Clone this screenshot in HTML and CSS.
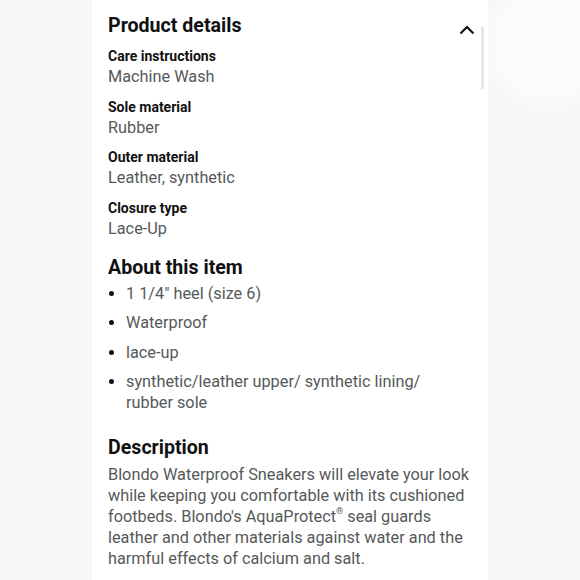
FILE: index.html
```html
<!DOCTYPE html>
<html>
<head>
<meta charset="utf-8">
<link rel="stylesheet" href="styles.css">
</head>
<body>
<div class="page">
  <div class="panel">
    <section class="details">
      <div class="head">
        <h2 class="title">Product details</h2>
        <svg class="chev" width="16" height="10" viewBox="0 0 16 10"><path d="M1.5 8.5 L8 2 L14.5 8.5" fill="none" stroke="#0f1111" stroke-width="2.2"/></svg>
      </div>
      <div class="scrollbar"></div>
      <div class="attr"><div class="label">Care instructions</div><div class="value">Machine Wash</div></div>
      <div class="attr"><div class="label">Sole material</div><div class="value">Rubber</div></div>
      <div class="attr"><div class="label">Outer material</div><div class="value">Leather, synthetic</div></div>
      <div class="attr"><div class="label">Closure type</div><div class="value">Lace-Up</div></div>
    </section>
    <section class="about">
      <h2 class="title">About this item</h2>
      <ul class="bullets">
        <li>1 1/4" heel (size 6)</li>
        <li>Waterproof</li>
        <li>lace-up</li>
        <li>synthetic/leather upper/ synthetic lining/ rubber sole</li>
      </ul>
    </section>
    <section class="desc">
      <h2 class="title">Description</h2>
      <p class="text">Blondo Waterproof Sneakers will elevate your look while keeping you comfortable with its cushioned footbeds. Blondo's AquaProtect<span class="reg">®</span> seal guards leather and other materials against water and the harmful effects of calcium and salt.</p>
    </section>
  </div>
  <div class="side"></div>
</div>
</body>
</html>
```
FILE: styles.css
```css
* { box-sizing: border-box; }
html, body { margin: 0; padding: 0; }
body {
  width: 580px;
  height: 580px;
  overflow: hidden;
  background: #f7f7f7;
  font-family: Roboto, "Noto Sans", sans-serif;
  color: #0f1111;
}
.page {
  display: flex;
  height: 580px;
  padding-left: 92px;
}
.panel {
  width: 396px;
  background: #fff;
  padding: 12px 16px 0 16px;
}
.side {
  flex: 1;
  background: radial-gradient(circle at 60px 45px, #fcfcfc 0, #fcfcfc 45px, #f7f7f7 70px);
}
.details { position: relative; }
.head {
  display: flex;
  justify-content: space-between;
  align-items: center;
}
.title {
  margin: 0;
  font-size: 19.6px;
  font-weight: 700;
  line-height: 28px;
}
.chev { margin-top: 8px; margin-right: -3px; }
.scrollbar {
  position: absolute;
  right: -12px;
  top: 15px;
  width: 3px;
  height: 62px;
  background: #e6e6e6;
}
.attr { margin-top: 10.5px; }
.head + .scrollbar + .attr { margin-top: 7px; }
.label {
  font-size: 14px;
  font-weight: 700;
  line-height: 19px;
}
.value {
  font-size: 16.3px;
  line-height: 21px;
  color: #565959;
}
.about { margin-top: 15px; }
.bullets {
  margin: 1px 0 0;
  padding: 0 10px 0 18px;
  list-style: none;
}
.bullets li {
  position: relative;
  font-size: 16.3px;
  line-height: 21px;
  color: #565959;
  margin-bottom: 8.5px;
}
.bullets li::before {
  content: "";
  position: absolute;
  left: -17px;
  top: 8px;
  width: 5px;
  height: 5px;
  border-radius: 50%;
  background: #0f1111;
}
.desc { margin-top: 21px; }
.text {
  margin: 2px 0 0;
  font-size: 16.3px;
  line-height: 21px;
  color: #565959;
}
.reg { font-size: 9px; line-height: 1; vertical-align: text-top; }
```
